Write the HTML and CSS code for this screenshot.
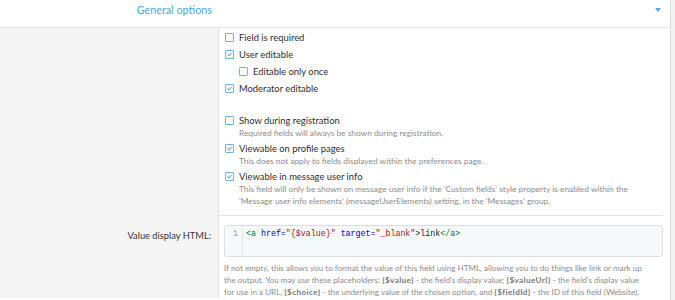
FILE: index.html
```html
<!DOCTYPE html>
<html lang="en">
<head>
    <meta charset="UTF-8">
    <meta name="viewport" content="width=device-width, initial-scale=1.0">
    <title>General options</title>
    <link rel="stylesheet" href="styles.css">
</head>
<body>
    <div class="block">
        <div class="block-header">
            <span class="block-title">General options</span>
            <span class="toggle"></span>
        </div>

        <dl class="form-row">
            <dt></dt>
            <dd class="first-row">
                <ul class="choices">
                    <li><span class="box"></span>Field is required</li>
                    <li><span class="box checked"><svg viewBox="0 0 9 9"><polyline points="2,4.6 3.8,6.3 7,2.6"/></svg></span>User editable</li>
                    <li class="sub"><span class="box"></span>Editable only once</li>
                    <li><span class="box checked"><svg viewBox="0 0 9 9"><polyline points="2,4.6 3.8,6.3 7,2.6"/></svg></span>Moderator editable</li>
                </ul>

                <ul class="choices group">
                    <li>
                        <span class="box"></span>Show during registration
                        <div class="hint">Required fields will always be shown during registration.</div>
                    </li>
                    <li>
                        <span class="box checked"><svg viewBox="0 0 9 9"><polyline points="2,4.6 3.8,6.3 7,2.6"/></svg></span>Viewable on profile pages
                        <div class="hint">This does not apply to fields displayed within the preferences page.</div>
                    </li>
                    <li>
                        <span class="box checked"><svg viewBox="0 0 9 9"><polyline points="2,4.6 3.8,6.3 7,2.6"/></svg></span>Viewable in message user info
                        <div class="hint">This field will only be shown on message user info if the 'Custom fields' style property is enabled within the 'Message user info elements' (messageUserElements) setting, in the 'Messages' group.</div>
                    </li>
                </ul>
            </dd>
        </dl>

        <dl class="form-row">
            <dt>Value display HTML:</dt>
            <dd class="code-row">
                <div class="code-editor">
                    <div class="gutter">1</div>
                    <pre class="code"><span class="tag">&lt;a</span> <span class="attr">href=</span><span class="str">"{$value}"</span> <span class="attr">target=</span><span class="str">"_blank"</span>&gt;link<span class="tag">&lt;/a&gt;</span></pre>
                </div>
                <div class="hint explain">If not empty, this allows you to format the value of this field using HTML, allowing you to do things like link or mark up the output. You may use these placeholders: <b>{$value}</b> - the field's display value; <b>{$valueUrl}</b> - the field's display value for use in a URL, <b>{$choice}</b> - the underlying value of the chosen option, and <b>{$fieldId}</b> - the ID of this field (Website).</div>
            </dd>
        </dl>
    </div>
</body>
</html>
```

FILE: styles.css
```css
body {
    margin: 0;
    padding: 0;
    background: #f3f3f3;
    font-family: "Segoe UI", Lato, sans-serif;
    font-size: 9.4px;
    color: #2f2f2f;
}

.block {
    width: 670px;
    background: #fff;
    border-right: 1px solid #dcdcdc;
    min-height: 300px;
}

.block-header {
    display: flex;
    align-items: flex-start;
    height: 27px;
    border-bottom: 1px solid #e6e6e6;
}

.block-title {
    width: 212px;
    text-align: right;
    font-size: 10.8px;
    line-height: 20px;
    color: #47a7eb;
}

.toggle {
    margin: 8px 0 0 443px;
    width: 0;
    height: 0;
    border-left: 3px solid transparent;
    border-right: 3px solid transparent;
    border-top: 4px solid #47a7eb;
}

.form-row {
    display: grid;
    grid-template-columns: 218px 445px;
    margin: 0;
}

.form-row dt {
    background: #f5f5f5;
    text-align: right;
    padding: 14px 7px 0 0;
    font-size: 9.3px;
    line-height: 12px;
    color: #333;
}

.form-row dd {
    margin: 0;
    border-left: 1px solid #e3e3e3;
}

.first-row {
    padding: 1px 0 7px 6px;
    border-bottom: 1px solid #e3e3e3;
}

.choices {
    list-style: none;
    margin: 0;
    padding: 0;
}

.choices li {
    line-height: 17px;
}

.choices .sub {
    padding-left: 14px;
}

.group {
    margin-top: 15px;
}

.group li {
    margin-bottom: 1px;
}

.box {
    display: inline-block;
    box-sizing: border-box;
    width: 9px;
    height: 9px;
    margin-right: 5px;
    vertical-align: -1px;
    border: 1px solid #6fb3e6;
    border-radius: 1px;
    background: #fff;
}

.box.checked {
    background: #f2f8fd;
}

.box svg {
    display: block;
    width: 7px;
    height: 7px;
}

.box polyline {
    fill: none;
    stroke: #3b8fd0;
    stroke-width: 1.2;
}

.hint {
    margin-top: -2px;
    padding: 0 20px 0 14px;
    font-size: 8.35px;
    line-height: 12px;
    color: #8c8c8c;
}

.code-row {
    padding: 9px 0 0 5px;
}

.code-editor {
    display: flex;
    height: 32px;
    box-sizing: border-box;
    border: 1px solid #d8dee4;
    border-radius: 3px;
    background: #f6f9fc;
}

.gutter {
    width: 18px;
    box-sizing: border-box;
    padding: 2px 4px 0 0;
    text-align: right;
    border-right: 1px solid #e4e8ec;
    font-family: "Liberation Mono", monospace;
    font-size: 8.3px;
    line-height: 12px;
    color: #999;
}

.code {
    margin: 0;
    padding: 2px 0 0 3px;
    font-family: "Liberation Mono", monospace;
    font-size: 8.3px;
    line-height: 12px;
    color: #222;
}

.tag {
    color: #170;
}

.attr {
    color: #00c;
}

.str {
    color: #a11;
}

.explain {
    margin-top: 5px;
    padding: 0 18px 0 0;
    font-size: 8.1px;
}

.explain b {
    color: #777;
    letter-spacing: 0.4px;
}
```
